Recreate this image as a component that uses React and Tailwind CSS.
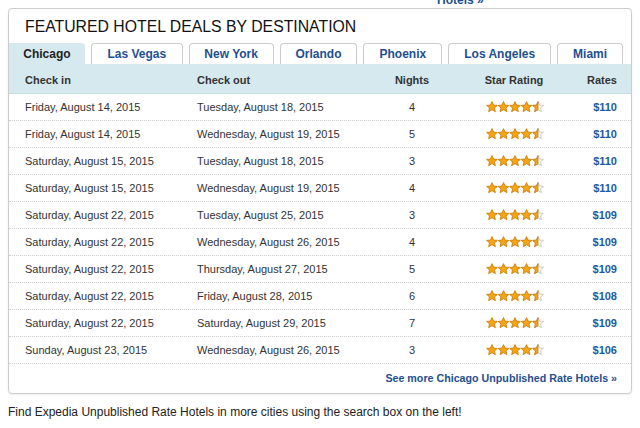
import React from "react";

const rows = [
  ["Friday, August 14, 2015", "Tuesday, August 18, 2015", 4, "$110"],
  ["Friday, August 14, 2015", "Wednesday, August 19, 2015", 5, "$110"],
  ["Saturday, August 15, 2015", "Tuesday, August 18, 2015", 3, "$110"],
  ["Saturday, August 15, 2015", "Wednesday, August 19, 2015", 4, "$110"],
  ["Saturday, August 22, 2015", "Tuesday, August 25, 2015", 3, "$109"],
  ["Saturday, August 22, 2015", "Wednesday, August 26, 2015", 4, "$109"],
  ["Saturday, August 22, 2015", "Thursday, August 27, 2015", 5, "$109"],
  ["Saturday, August 22, 2015", "Friday, August 28, 2015", 6, "$108"],
  ["Saturday, August 22, 2015", "Saturday, August 29, 2015", 7, "$109"],
  ["Sunday, August 23, 2015", "Wednesday, August 26, 2015", 3, "$106"],
];

const tabs = [
  ["Las Vegas", "w-[92px]"],
  ["New York", "w-[85px]"],
  ["Orlando", "w-[78px]"],
  ["Phoenix", "w-[79px]"],
  ["Los Angeles", "w-[103px]"],
  ["Miami", "w-[66px]"],
];

const STAR = "M6 0.6 L7.6 4.1 L11.4 4.4 L8.5 6.9 L9.4 10.7 L6 8.7 L2.6 10.7 L3.5 6.9 L0.6 4.4 L4.4 4.1 Z";

function Stars() {
  return (
    <svg width="58" height="12" viewBox="0 0 58 12">
      {[0, 1, 2, 3].map((i) => (
        <path
          key={i}
          d={STAR}
          transform={`translate(${i * 11.5},0)`}
          fill="#f5a414"
          stroke="#c77b06"
          strokeWidth="0.8"
        />
      ))}
      <path d={STAR} transform="translate(46,0)" fill="#ffffff" stroke="#bbbbbb" strokeWidth="0.8" />
      <path d="M6 0.6 L6 8.7 L2.6 10.7 L3.5 6.9 L0.6 4.4 L4.4 4.1 Z" transform="translate(46,0)" fill="#f5a414" stroke="#c77b06" strokeWidth="0.8" />
    </svg>
  );
}

export default function App() {
  return (
    <div className="w-[640px] h-[428px] bg-white overflow-hidden font-['Liberation_Sans',Arial,sans-serif] text-[#333]">
      <div className="h-[8px] overflow-hidden flex">
        <div className="ml-[437px] -mt-[9px] text-[12px] font-bold text-[#1d4f91]">Hotels »</div>
      </div>
      <div className="ml-[8px] w-[624px] border border-[#cccccc] rounded-[4px] shadow-[0_1px_2px_rgba(0,0,0,0.08)]">
        <div className="h-[34px] flex items-center pl-[16px] pt-[2px] text-[15.8px] text-[#111]">
          FEATURED HOTEL DEALS BY DESTINATION
        </div>
        <div className="flex items-end h-[21px] gap-[6px] pr-[8px]">
          <div className="w-[76px] h-[21px] bg-[#d6e9ef] rounded-tr-[4px] flex items-center justify-center text-[12px] font-bold text-[#222]">
            Chicago
          </div>
          {tabs.map(([name, w]) => (
            <div
              key={name}
              className={`${w} h-[21px] border border-b-0 border-[#cccccc] rounded-t-[4px] bg-white flex items-center justify-center text-[12px] font-bold text-[#1d4f91]`}
            >
              {name}
            </div>
          ))}
        </div>
        <div className="h-[30px] bg-[#d6e9ef] border-b border-[#c6dbe2] flex items-center pl-[16px] pt-[3px] text-[11px] font-bold text-[#333]">
          <div className="w-[172px]">Check in</div>
          <div className="w-[172px]">Check out</div>
          <div className="w-[86px] text-center">Nights</div>
          <div className="w-[118px] text-center">Star Rating</div>
          <div className="w-[44px] text-right">Rates</div>
        </div>
        {rows.map((r, i) => (
          <div
            key={i}
            className="h-[27px] flex items-center pl-[16px] text-[11px] text-[#333] border-b border-dotted border-[#cfcfcf]"
          >
            <div className="w-[172px]">{r[0]}</div>
            <div className="w-[172px]">{r[1]}</div>
            <div className="w-[86px] text-center">{r[2]}</div>
            <div className="w-[118px] flex justify-center pl-[2px]">
              <Stars />
            </div>
            <div className="w-[44px] text-right font-bold text-[#1d5aa0]">{r[3]}</div>
          </div>
        ))}
        <div className="h-[29px] flex items-center justify-end pr-[14px] text-[10.7px] font-bold text-[#1d4f91]">
          See more Chicago Unpublished Rate Hotels »
        </div>
      </div>
      <div className="mt-[9px] ml-[8px] text-[12px] text-[#222]">
        Find Expedia Unpublished Rate Hotels in more cities using the search box on the left!
      </div>
    </div>
  );
}
